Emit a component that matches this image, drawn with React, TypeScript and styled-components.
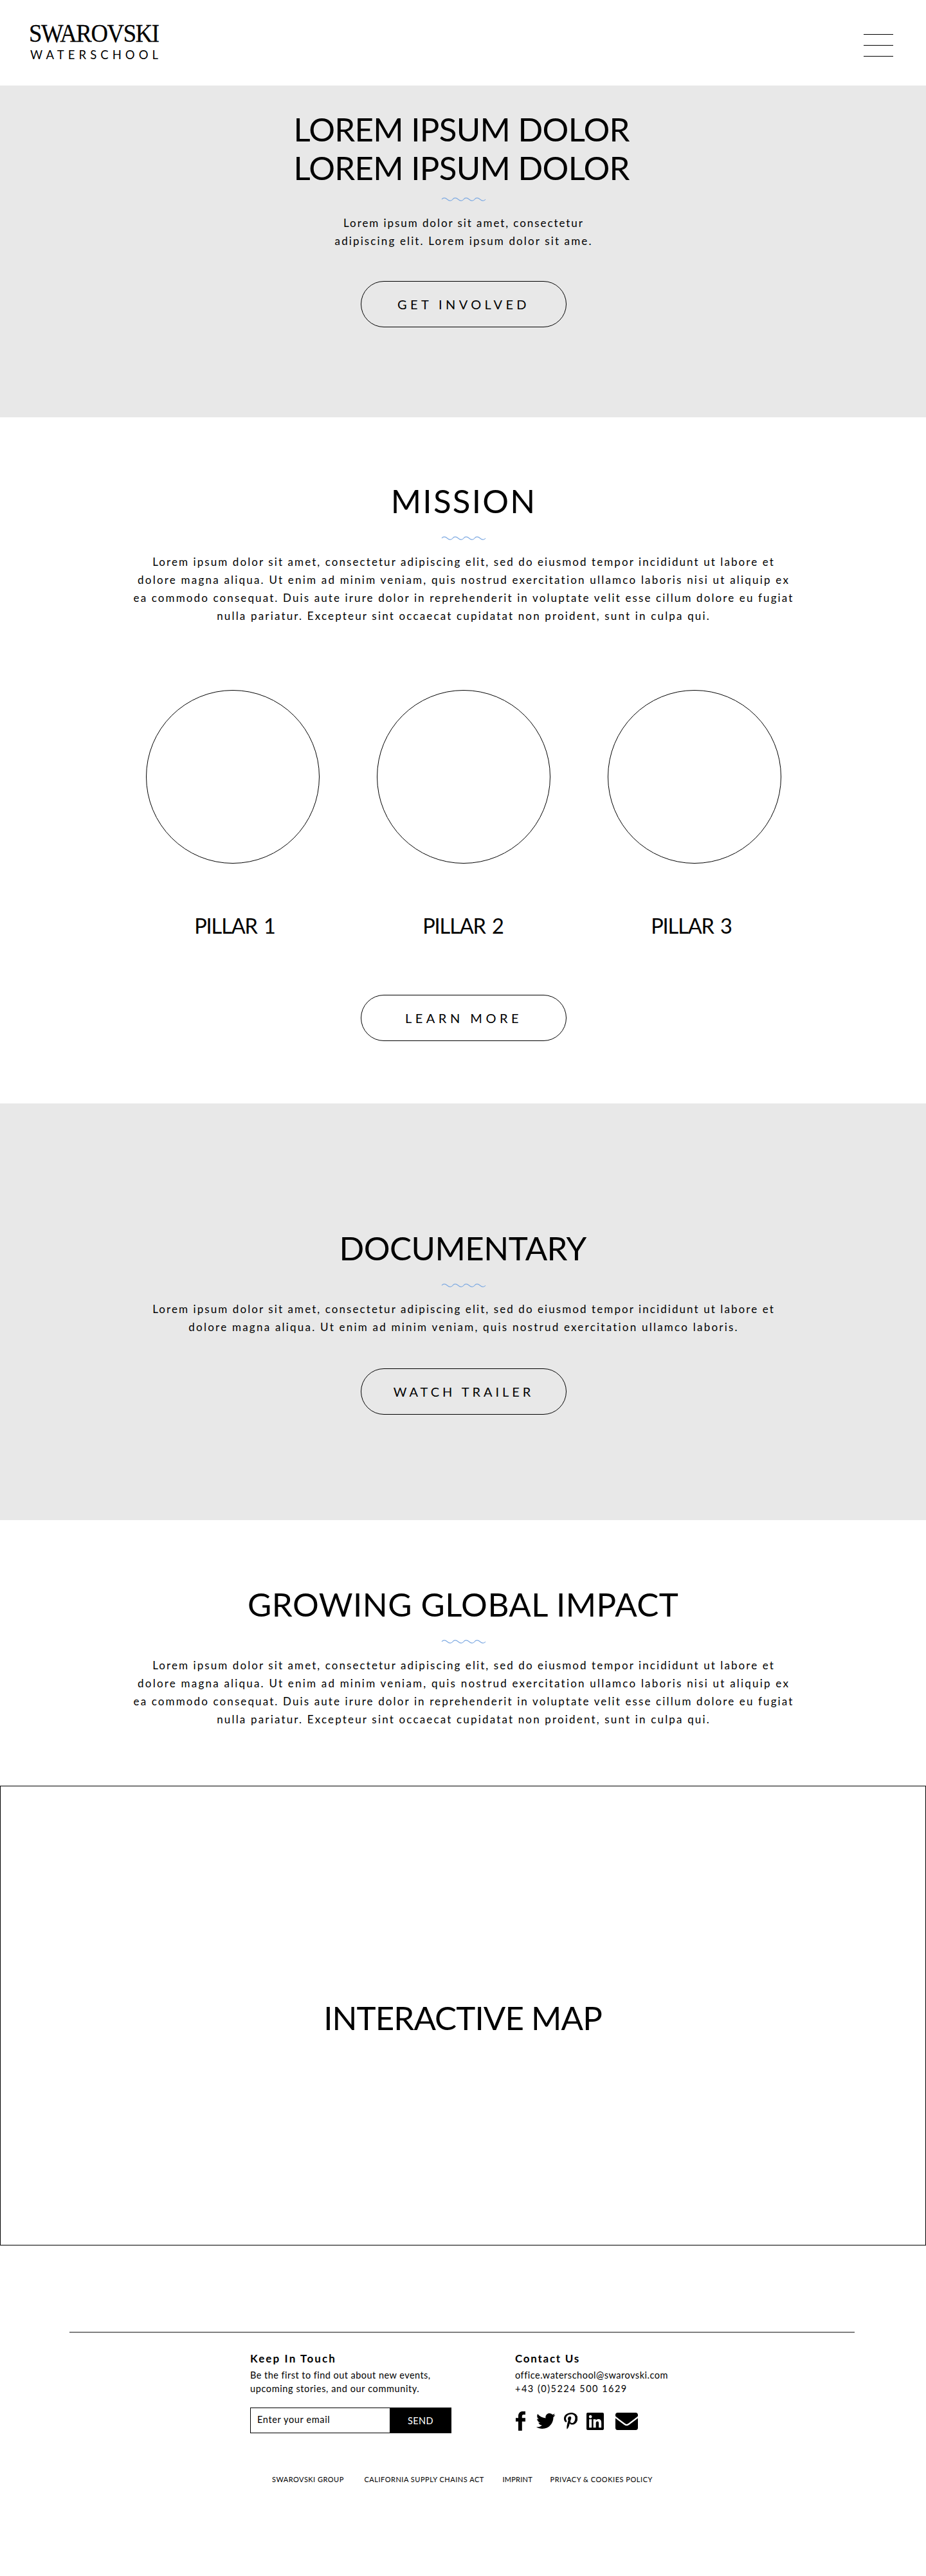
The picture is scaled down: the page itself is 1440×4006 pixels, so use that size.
import React from "react";
import styled, { createGlobalStyle } from "styled-components";
import { FaEnvelope, FaLinkedin, FaPinterestP, FaTwitter } from "react-icons/fa";

const GlobalStyle = createGlobalStyle`
  *, *::before, *::after { box-sizing: border-box; }
  body {
    margin: 0;
    background: #fff;
    color: #000;
    font-family: Lato, "Liberation Sans", sans-serif;
    font-variant-ligatures: none;
  }
  h1, h2, h3, h4, p { margin: 0; font-weight: 400; }
  a { color: inherit; text-decoration: none; }
`;

const Page = styled.div`
  width: 1440px;
  height: 4006px;
`;

const Header = styled.header`
  display: flex;
  justify-content: space-between;
  height: 133px;
  padding: 32px 51px 0 47px;
`;

const Logo = styled.a`
  display: flex;
  flex-direction: column;
  gap: 2px;
  width: 210px;
  white-space: nowrap;
`;

const LogoName = styled.span`
  margin-left: -2px;
  font: 400 40px/40px "Liberation Serif", serif;
  letter-spacing: -1.5px;
  -webkit-text-stroke: 0.3px #000;
  transform: scaleX(0.917);
  transform-origin: left center;
`;

const LogoSub = styled.span`
  font-size: 18.5px;
  line-height: 22px;
  letter-spacing: 6.07px;
`;

const MenuButton = styled.button`
  display: flex;
  flex-direction: column;
  gap: 16px;
  width: 46px;
  height: 35px;
  margin-top: 21px;
  padding: 0;
  border: 0;
  background: none;
`;

const MenuBar = styled.span`
  flex: none;
  width: 46px;
  height: 1px;
  background: #000;
`;

const Section = styled.section<{ $height: number; $top: number; $shaded?: boolean }>`
  display: flex;
  flex-direction: column;
  align-items: center;
  height: ${(p) => p.$height}px;
  padding-top: ${(p) => p.$top}px;
  background: ${(p) => (p.$shaded ? "#e8e8e8" : "#fff")};
`;

const Heading = styled.h2<{ $spacing: number; $trim?: number }>`
  padding-right: ${(p) => p.$trim ?? 0}px;
  font-size: 51px;
  line-height: 60px;
  letter-spacing: ${(p) => p.$spacing}px;
  margin-right: ${(p) => -p.$spacing}px;
  text-align: center;
  white-space: nowrap;
`;

const WaveMark = styled.svg<{ $top: number }>`
  display: block;
  width: 70px;
  height: 6px;
  margin: ${(p) => p.$top}px 0 20px 2px;
  fill: none;
  stroke: #7eaae2;
  stroke-width: 1.1;
`;

const Copy = styled.p`
  display: flex;
  flex-direction: column;
  align-items: center;
  font-size: 17px;
  line-height: 28px;
  white-space: nowrap;
`;

const CopyLine = styled.span<{ $spacing: number }>`
  letter-spacing: ${(p) => p.$spacing}px;
  margin-right: ${(p) => -p.$spacing}px;
`;

const PillButton = styled.a<{ $top: number; $spacing: number }>`
  display: flex;
  align-items: center;
  justify-content: center;
  flex-shrink: 0;
  width: 320px;
  height: 72px;
  margin: ${(p) => p.$top}px 0 0 2px;
  border: 1px solid #000;
  border-radius: 36px;
  font-size: 20px;
  line-height: 24px;
  letter-spacing: ${(p) => p.$spacing}px;
`;

const Circles = styled.div`
  display: flex;
  gap: 89px;
  margin: 101px 0 0 1px;
`;

const Circle = styled.div`
  width: 270px;
  height: 270px;
  border: 1px solid #000;
  border-radius: 50%;
`;

const PillarNames = styled.div`
  display: flex;
  gap: 85px;
  margin-top: 77px;
`;

const PillarName = styled.h3`
  width: 270px;
  font-size: 32.5px;
  line-height: 40px;
  letter-spacing: -1.1px;
  word-spacing: 3px;
  text-align: center;
`;

const MapPanel = styled.section`
  display: flex;
  align-items: center;
  justify-content: center;
  height: 715px;
  padding-top: 6px;
  border: 1px solid #000;
`;

const Footer = styled.footer`
  display: flex;
  flex-direction: column;
  width: 1221px;
  margin: 134px auto 0 108px;
  padding-top: 28px;
  border-top: 2px solid #808080;
`;

const FooterColumns = styled.div`
  display: grid;
  grid-template-columns: 412px 300px;
  padding-left: 281px;
`;

const FooterTitle = styled.h4<{ $spacing: number }>`
  margin-bottom: 3px;
  font-size: 17px;
  font-weight: 700;
  line-height: 24px;
  letter-spacing: ${(p) => p.$spacing}px;
`;

const FooterLine = styled.p<{ $spacing: number }>`
  font-size: 14.5px;
  line-height: 21px;
  letter-spacing: ${(p) => p.$spacing}px;
  white-space: nowrap;
`;

const SignUp = styled.form`
  display: flex;
  width: 313px;
  height: 40px;
  margin-top: 19px;
`;

const EmailInput = styled.input`
  width: 217px;
  height: 40px;
  padding: 0 10px 3px;
  border: 1px solid #000;
  border-right: 0;
  border-radius: 0;
  background: #fff;
  font: 400 14.5px/21px Lato, "Liberation Sans", sans-serif;
  letter-spacing: 0.63px;
  &::placeholder { color: #000; opacity: 1; }
`;

const SendButton = styled.button`
  width: 96px;
  padding: 1px 0 0;
  border: 0;
  background: #000;
  color: #fff;
  font: 400 14.5px/21px Lato, "Liberation Sans", sans-serif;
  letter-spacing: 0.45px;
`;

const SocialRow = styled.div`
  display: flex;
  align-items: center;
  height: 30px;
  margin: 25px 0 0 1px;
`;

const SocialLink = styled.a<{ $w: number; $h: number; $gap?: number }>`
  display: block;
  width: ${(p) => p.$w}px;
  height: ${(p) => p.$h}px;
  margin-left: ${(p) => p.$gap ?? 0}px;
  svg { display: block; width: 100%; height: 100%; fill: #000; }
`;

const LegalLinks = styled.nav`
  display: flex;
  margin: 65px 0 0 315px;
  font-size: 11px;
  line-height: 14px;
  white-space: nowrap;
`;

const LegalLink = styled.a<{ $width: number; $spacing: number }>`
  width: ${(p) => p.$width}px;
  letter-spacing: ${(p) => p.$spacing}px;
`;

const Wave = ({ top = 25 }: { top?: number }) => (
  <WaveMark $top={top} viewBox="0 0 70 6">
    <path d="M1 3 C3 .2 6.5 .2 9.5 3 S16 5.8 18 3 S23.5 .2 26.5 3 S33 5.8 35 3 S40.5 .2 43.5 3 S50 5.8 52 3 S57.5 .2 60.5 3 S67 5.8 69 3" />
  </WaveMark>
);

type Line = { text: string; spacing: number };

const Lines = ({ lines }: { lines: Line[] }) => (
  <Copy>
    {lines.map((l) => (
      <CopyLine key={l.text} $spacing={l.spacing}>{l.text}</CopyLine>
    ))}
  </Copy>
);

const heroCopy: Line[] = [
  { text: "Lorem ipsum dolor sit amet, consectetur", spacing: 1.93 },
  { text: "adipiscing elit. Lorem ipsum dolor sit ame.", spacing: 2.13 },
];

const opening: Line = {
  text: "Lorem ipsum dolor sit amet, consectetur adipiscing elit, sed do eiusmod tempor incididunt ut labore et",
  spacing: 2.085,
};

const longCopy: Line[] = [
  opening,
  { text: "dolore magna aliqua. Ut enim ad minim veniam, quis nostrud exercitation ullamco laboris nisi ut aliquip ex", spacing: 2.21 },
  { text: "ea commodo consequat. Duis aute irure dolor in reprehenderit in voluptate velit esse cillum dolore eu fugiat", spacing: 2.12 },
  { text: "nulla pariatur. Excepteur sint occaecat cupidatat non proident, sunt in culpa qui.", spacing: 2.17 },
];

const documentaryCopy: Line[] = [
  opening,
  { text: "dolore magna aliqua. Ut enim ad minim veniam, quis nostrud exercitation ullamco laboris.", spacing: 2.23 },
];

const pillars = ["PILLAR 1", "PILLAR 2", "PILLAR 3"];

const legal = [
  { label: "SWAROVSKI GROUP", width: 143.5, spacing: 0.485 },
  { label: "CALIFORNIA SUPPLY CHAINS ACT", width: 215, spacing: 0.508 },
  { label: "IMPRINT", width: 74, spacing: 0.228 },
  { label: "PRIVACY & COOKIES POLICY", width: 170, spacing: 0.536 },
];

export default function App() {
  return (
    <Page>
      <GlobalStyle />
      <Header>
        <Logo href="#">
          <LogoName>SWAROVSKI</LogoName>
          <LogoSub>WATERSCHOOL</LogoSub>
        </Logo>
        <MenuButton aria-label="Menu">
          <MenuBar />
          <MenuBar />
          <MenuBar />
        </MenuButton>
      </Header>

      <Section $height={516} $top={38} $shaded>
        <Heading as="h1" $spacing={-0.71} $trim={4}>
          LOREM IPSUM DOLOR
          <br />
          LOREM IPSUM DOLOR
        </Heading>
        <Wave top={16} />
        <Lines lines={heroCopy} />
        <PillButton href="#" $top={48} $spacing={5.38}>GET INVOLVED</PillButton>
      </Section>

      <Section $height={1067} $top={100}>
        <Heading $spacing={2.24}>MISSION</Heading>
        <Wave />
        <Lines lines={longCopy} />
        <Circles>
          {pillars.map((p) => <Circle key={p} />)}
        </Circles>
        <PillarNames>
          {pillars.map((p) => <PillarName key={p}>{p}</PillarName>)}
        </PillarNames>
        <PillButton href="#" $top={87} $spacing={5.52}>LEARN MORE</PillButton>
      </Section>

      <Section $height={648} $top={195} $shaded>
        <Heading $spacing={-0.55}>DOCUMENTARY</Heading>
        <Wave />
        <Lines lines={documentaryCopy} />
        <PillButton href="#" $top={50} $spacing={4.97}>WATCH TRAILER</PillButton>
      </Section>

      <Section $height={413} $top={101}>
        <Heading $spacing={0.48}>GROWING GLOBAL IMPACT</Heading>
        <Wave />
        <Lines lines={longCopy} />
      </Section>

      <MapPanel>
        <Heading $spacing={-0.91}>INTERACTIVE MAP</Heading>
      </MapPanel>

      <Footer>
        <FooterColumns>
          <div>
            <FooterTitle $spacing={2.13}>Keep In Touch</FooterTitle>
            <FooterLine $spacing={0.46}>Be the first to find out about new events,</FooterLine>
            <FooterLine $spacing={0.606}>upcoming stories, and our community.</FooterLine>
            <SignUp>
              <EmailInput placeholder="Enter your email" />
              <SendButton type="button">SEND</SendButton>
            </SignUp>
          </div>
          <div>
            <FooterTitle $spacing={1.73}>Contact Us</FooterTitle>
            <FooterLine $spacing={0.509}>office.waterschool@swarovski.com</FooterLine>
            <FooterLine $spacing={1.484}>+43 (0)5224 500 1629</FooterLine>
            <SocialRow>
              <SocialLink href="#" aria-label="Facebook" $w={15.3} $h={30}>
                <svg viewBox="0 0 15.3 30">
                  <path d="M4 30V15.7H0V10.2H4V7.2C4 2.6 6.7 0 11 0H15.3V5.1H12.4C10.5 5.1 9.8 6 9.8 7.7V10.2H15.3V15.7H9.8V30Z" />
                </svg>
              </SocialLink>
              <SocialLink href="#" aria-label="Twitter" $w={29.5} $h={24} $gap={17.2}>
                <FaTwitter viewBox="0 48 512 416" preserveAspectRatio="none" />
              </SocialLink>
              <SocialLink href="#" aria-label="Pinterest" $w={21.3} $h={25.7} $gap={13}>
                <FaPinterestP viewBox="0 6.5 384 499" preserveAspectRatio="none" />
              </SocialLink>
              <SocialLink href="#" aria-label="LinkedIn" $w={27} $h={27} $gap={13.7}>
                <FaLinkedin viewBox="0 32 448 448" />
              </SocialLink>
              <SocialLink href="#" aria-label="Email" $w={35} $h={27} $gap={18}>
                <FaEnvelope viewBox="0 64 512 384" preserveAspectRatio="none" />
              </SocialLink>
            </SocialRow>
          </div>
        </FooterColumns>
        <LegalLinks>
          {legal.map((l) => (
            <LegalLink key={l.label} href="#" $width={l.width} $spacing={l.spacing}>{l.label}</LegalLink>
          ))}
        </LegalLinks>
      </Footer>
    </Page>
  );
}
